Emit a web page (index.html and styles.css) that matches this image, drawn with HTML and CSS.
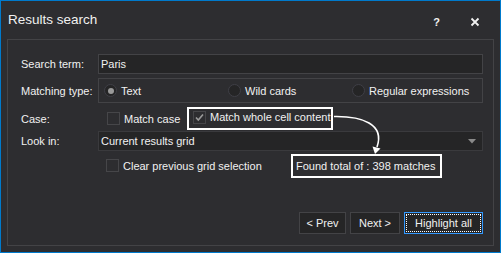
FILE: index.html
```html
<!DOCTYPE html>
<html lang="en">
<head>
  <meta charset="UTF-8" />
  <title>Results search</title>
  <link rel="stylesheet" href="styles.css">
</head>
<body>
  <div class="dialog">
    <div class="titlebar">
      <span class="title">Results search</span>
      <span class="help">?</span>
      <svg class="close" width="10" height="10" viewBox="0 0 10 10">
        <path d="M1.5 1.5 L8.5 8.5 M8.5 1.5 L1.5 8.5" stroke="#f1f1f1" stroke-width="1.8" fill="none" />
      </svg>
    </div>

    <div class="group">
      <div class="row row-field">
        <span class="label">Search term:</span>
        <div class="field">Paris</div>
      </div>

      <div class="row row-radios">
        <span class="label">Matching type:</span>
        <div class="radios">
          <span class="radio"><i class="dot on"></i>Text</span>
          <span class="radio"><i class="dot"></i>Wild cards</span>
          <span class="radio"><i class="dot"></i>Regular expressions</span>
        </div>
      </div>

      <div class="row row-case">
        <span class="label">Case:</span>
        <div class="checks">
          <span class="check case"><i class="box"></i>Match case</span>
          <span class="check marked">
            <i class="box">
              <svg width="11" height="11" viewBox="0 0 11 11">
                <path d="M2 5.5 L4.3 8 L9 2.5" stroke="#9a9a9a" stroke-width="1.6" fill="none" />
              </svg>
            </i>Match whole cell content</span>
        </div>
      </div>

      <div class="row row-field">
        <span class="label">Look in:</span>
        <div class="field combo">
          <span>Current results grid</span>
          <svg width="8" height="5" viewBox="0 0 8 5"><path d="M0 0 H8 L4 4.5 Z" fill="#8a8a8a" /></svg>
        </div>
      </div>

      <div class="row row-clear">
        <span class="label"></span>
        <div class="clear-line">
          <span class="check clear"><i class="box"></i>Clear previous grid selection</span>
          <span class="found">Found total of : 398 matches</span>
        </div>
      </div>

      <div class="buttons">
        <button class="btn prev">&lt; Prev</button>
        <button class="btn next">Next &gt;</button>
        <button class="btn primary">Highlight all</button>
      </div>
    </div>

    <!-- callout arrow from the option to the result -->
    <svg class="callout" width="501" height="253" viewBox="0 0 501 253">
      <path d="M334 116.5 C 362 116, 385 124, 377 147" stroke="#fff" stroke-width="1.6" fill="none" />
      <polygon points="375,154 372.5,146.5 380.5,148.5" fill="#fff" />
    </svg>
  </div>
</body>
</html>
```

FILE: styles.css
```css
:root {
  --bg: #2d2d30;
  --field-bg: #252526;
  --line: #434346;
  --text: #f1f1f1;
  --accent: #007acc;
}

* {
  box-sizing: border-box;
}

body {
  margin: 0;
  background: var(--bg);
  font-family: "Liberation Sans", Arial, sans-serif;
  font-size: 11px;
  color: var(--text);
}

.dialog {
  position: relative;
  width: 501px;
  height: 253px;
  border: 1px solid var(--accent);
  background: var(--bg);
  display: flex;
  flex-direction: column;
}

.titlebar {
  height: 38px;
  display: flex;
  align-items: flex-start;
  padding: 11px 0 0 7px;
}

.title {
  font-size: 13.5px;
  line-height: 16px;
  flex: 1;
}

.help {
  font-weight: bold;
  font-size: 11px;
  line-height: 14px;
  margin: 3px 30px 0 0;
}

.close {
  margin: 5px 20px 0 0;
}

.group {
  flex: 1;
  margin: 0 6px 6px 6px;
  border: 1px solid var(--line);
  padding: 14px 10px 11px 13px;
  display: flex;
  flex-direction: column;
}

.row {
  display: grid;
  grid-template-columns: 77px 1fr;
  align-items: center;
}

.label {
  line-height: 14px;
}

.row-field {
  height: 20px;
}

.row-field + .row-radios {
  margin-top: 4px;
}

.field {
  height: 20px;
  background: var(--field-bg);
  border: 1px solid var(--line);
  padding: 0 2px;
  line-height: 18px;
}

.combo {
  display: flex;
  align-items: center;
  justify-content: space-between;
  padding-right: 6px;
  border-color: #3a3a3d;
}

.row-radios {
  height: 25px;
}

.radios {
  height: 25px;
  border: 1px solid var(--line);
  padding-left: 5px;
  display: grid;
  grid-template-columns: repeat(3, 124px);
  align-items: center;
}

.radio {
  display: flex;
  align-items: center;
  gap: 4px;
}

.dot {
  width: 13px;
  height: 13px;
  border-radius: 50%;
  border: 1px solid #3f3f46;
  background: var(--field-bg);
  display: flex;
  align-items: center;
  justify-content: center;
}

.dot.on::after {
  content: "";
  width: 6px;
  height: 6px;
  border-radius: 50%;
  background: #9a9a9a;
}

.row-case {
  height: 23px;
  margin-top: 4px;
}

.checks {
  display: flex;
  align-items: center;
  padding-left: 9px;
  height: 23px;
}

.check {
  display: flex;
  align-items: center;
  gap: 4px;
}

.box {
  width: 13px;
  height: 13px;
  border: 1px solid #464649;
  background: var(--bg);
  display: flex;
  align-items: center;
  justify-content: center;
}

.case {
  width: 80px;
}

.marked {
  height: 23px;
  border: 2px solid #fff;
  padding: 0 1px 3px 4px;
}

.row-case + .row-field {
  margin-top: 1px;
}

.row-clear {
  height: 24px;
  margin-top: 3px;
}

.clear-line {
  display: flex;
  align-items: center;
  padding-left: 8px;
}

.clear {
  width: 185px;
  padding-bottom: 1px;
}

.found {
  height: 24px;
  border: 2px solid #fff;
  padding: 0 5px 0 3px;
  line-height: 20px;
}

.buttons {
  margin-top: auto;
  display: flex;
  justify-content: flex-end;
  gap: 4px;
}

.btn {
  height: 22px;
  background: var(--field-bg);
  border: 1px solid var(--line);
  color: var(--text);
  font-family: inherit;
  font-size: 11px;
  padding: 0;
}

.prev {
  width: 47px;
}

.next {
  width: 50px;
}

.primary {
  width: 79px;
  border-color: #3399ff;
  outline: 1px dotted #fff;
  outline-offset: -3px;
}

.callout {
  position: absolute;
  top: -1px;
  left: -1px;
  pointer-events: none;
}
```
